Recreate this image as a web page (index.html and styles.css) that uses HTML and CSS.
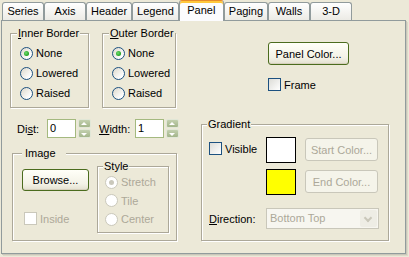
FILE: index.html
```html
<!DOCTYPE html>
<html lang="en">
<head>
  <meta charset="UTF-8" />
  <title>Panel Editor</title>
  <link rel="stylesheet" href="styles.css">
</head>
<body>

<div class="tabs">
  <div class="tab">Series</div>
  <div class="tab">Axis</div>
  <div class="tab">Header</div>
  <div class="tab">Legend</div>
  <div class="tab active">Panel</div>
  <div class="tab">Paging</div>
  <div class="tab">Walls</div>
  <div class="tab">3-D</div>
</div>

<div class="panel">

  <div class="borders">
    <fieldset class="group inner-group">
      <legend><u>I</u>nner Border</legend>
      <div class="radio-list">
        <div class="radio checked"><span class="dot"></span>None</div>
        <div class="radio"><span class="dot"></span>Lowered</div>
        <div class="radio"><span class="dot"></span>Raised</div>
      </div>
    </fieldset>
    <fieldset class="group outer-group">
      <legend><u>O</u>uter Border</legend>
      <div class="radio-list">
        <div class="radio checked"><span class="dot"></span>None</div>
        <div class="radio"><span class="dot"></span>Lowered</div>
        <div class="radio"><span class="dot"></span>Raised</div>
      </div>
    </fieldset>
  </div>

  <div class="panel-options">
    <button class="btn color-btn">Panel Color...</button>
    <div class="check frame-check"><span class="box"></span>Frame</div>
  </div>

  <div class="left-bottom">
    <div class="size-row">
      <span class="size-label">Di<u>s</u>t:</span>
      <div class="edit">0</div>
      <div class="spin"><span class="up"></span><span class="down"></span></div>
      <span class="size-label width-label"><u>W</u>idth:</span>
      <div class="edit">1</div>
      <div class="spin"><span class="up"></span><span class="down"></span></div>
    </div>

    <fieldset class="group image-group">
      <legend>Image</legend>
      <div class="image-body">
        <div class="image-left">
          <button class="btn browse-btn">Browse...</button>
          <div class="check disabled inside-check"><span class="box"></span>Inside</div>
        </div>
        <fieldset class="group style-group disabled">
          <legend>Style</legend>
          <div class="radio-list">
            <div class="radio checked"><span class="dot"></span>Stretch</div>
            <div class="radio"><span class="dot"></span>Tile</div>
            <div class="radio"><span class="dot"></span>Center</div>
          </div>
        </fieldset>
      </div>
    </fieldset>
  </div>

  <fieldset class="group gradient-group">
    <legend>Gradient</legend>
    <div class="gradient-grid">
      <div class="check visible-check"><span class="box"></span>Visible</div>
      <div class="swatch white"></div>
      <button class="btn disabled grad-btn">Start Color...</button>
      <div></div>
      <div class="swatch yellow"></div>
      <button class="btn disabled grad-btn">End Color...</button>
      <span class="direction-label"><u>D</u>irection:</span>
      <div class="combo">
        <span class="combo-text">Bottom Top</span>
        <span class="combo-arrow"></span>
      </div>
    </div>
  </fieldset>

</div>

</body>
</html>
```

FILE: styles.css
```css
:root {
  --face: #ece9d8;
  --tab-border: #919b9c;
  --etch: #aca899;
  --disabled: #aca899;
  --disabled-border: #cac8bb;
  --check-border: #1c5180;
}

* {
  box-sizing: border-box;
}

body {
  margin: 0;
  width: 409px;
  height: 257px;
  overflow: hidden;
  background: var(--face);
  color: #000;
  font: 11px "Liberation Sans", Arial, sans-serif;
}

u {
  text-decoration: underline;
  text-underline-offset: 1px;
}

/* tab strip */

.tabs {
  display: flex;
  align-items: flex-end;
  height: 20px;
  padding-left: 2px;
}

.tab {
  height: 18px;
  min-width: 42px;
  padding: 0 4px;
  border: 1px solid var(--tab-border);
  border-bottom: 0;
  border-radius: 3px 3px 0 0;
  background: linear-gradient(#fff, #ecebe5);
  line-height: 17px;
  text-align: center;
}

.tab.active {
  position: relative;
  z-index: 1;
  height: 21px;
  min-width: 45px;
  margin-bottom: -1px;
  border-top-color: #e68b2c;
  background: #fcfcfe;
  box-shadow: inset 0 2px 0 #ffc83c;
  padding-top: 2px;
  line-height: 15px;
}

/* page body */

.panel {
  display: grid;
  grid-template-columns: 190px 188px;
  grid-template-rows: 81px auto;
  align-content: start;
  align-items: start;
  width: 405px;
  height: 234px;
  margin-left: 1px;
  padding: 6px 0 0 8px;
  border: 1px solid var(--tab-border);
  box-shadow: 1px 1px 0 #c9c7ba, 2px 2px 0 #dcd9c8;
}

.group {
  margin: 0;
  padding: 0;
  min-width: 0;
  border: 1px solid var(--etch);
  box-shadow: inset 1px 1px 0 #fff, 1px 1px 0 #fff;
}

.group legend {
  margin-left: 6px;
  padding: 0 1px;
  line-height: 13px;
  background: var(--face);
}

.borders {
  display: flex;
  gap: 13px;
}

.inner-group {
  width: 79px;
  height: 81px;
}

.outer-group {
  width: 74px;
  height: 81px;
}

.radio-list {
  display: flex;
  flex-direction: column;
  padding: 3px 0 0 9px;
}

.radio {
  display: flex;
  align-items: center;
  gap: 3px;
  height: 20px;
}

.dot {
  position: relative;
  width: 13px;
  height: 13px;
  border: 1px solid var(--check-border);
  border-radius: 50%;
  background: linear-gradient(135deg, #dcd8cb, #fff 80%);
}

.radio.checked .dot::after {
  content: "";
  position: absolute;
  left: 3px;
  top: 3px;
  width: 5px;
  height: 5px;
  border-radius: 50%;
  background: radial-gradient(circle at 40% 40%, #6fdc6f, #21a121 70%);
}

.disabled .radio {
  color: var(--disabled);
}

.disabled .dot {
  border-color: var(--disabled-border);
  background: #fff;
}

.disabled .radio.checked .dot::after {
  background: var(--disabled-border);
}

/* buttons and checks */

.btn {
  display: block;
  margin: 0;
  padding: 0;
  font: inherit;
  color: #000;
  border: 1px solid #4b6c1e;
  border-radius: 3px;
  background: linear-gradient(#fffff8, #f3f2e6 70%, #e3e0d0);
  box-shadow: inset 0 -1px 0 #d6d0bd;
}

.btn.disabled {
  color: var(--disabled);
  border-color: #c9c7ba;
  background: #f5f4ea;
  box-shadow: none;
}

.check {
  display: flex;
  align-items: center;
  gap: 3px;
  height: 13px;
}

.box {
  width: 13px;
  height: 13px;
  border: 1px solid var(--check-border);
  background: linear-gradient(135deg, #dcdcd7, #fff);
}

.check.disabled {
  color: var(--disabled);
}

.check.disabled .box {
  border-color: var(--disabled-border);
  background: #fff;
}

.panel-options {
  padding: 15px 0 0 68px;
}

.color-btn {
  width: 81px;
  height: 23px;
}

.frame-check {
  margin-top: 13px;
}

/* dist / width row */

.left-bottom {
  padding-top: 11px;
}

.size-row {
  display: flex;
  align-items: center;
  height: 19px;
  padding-left: 7px;
}

.size-label {
  width: 30px;
}

.width-label {
  width: 36px;
  margin-left: 8px;
}

.edit {
  width: 29px;
  height: 19px;
  padding-left: 2px;
  border: 1px solid #a4b97f;
  background: #fff;
  line-height: 17px;
}

.spin {
  display: flex;
  flex-direction: column;
  gap: 1px;
  width: 13px;
  height: 19px;
  margin-left: 2px;
}

.spin span {
  position: relative;
  flex: 1;
  border: 1px solid #e1e7d7;
  border-radius: 2px;
  background: linear-gradient(#c3d0af, #a3b58a);
}

.spin span::after {
  content: "";
  position: absolute;
  left: 2px;
  top: 2px;
  border-left: 3.5px solid transparent;
  border-right: 3.5px solid transparent;
}

.spin .up::after {
  border-bottom: 3px solid #fff;
}

.spin .down::after {
  top: 3px;
  border-top: 3px solid #fff;
}

/* image group */

.image-group {
  width: 165px;
  height: 94px;
  margin: 9px 0 0 2px;
}

.image-group > legend {
  margin-left: 9px;
  padding: 0 10px 0 3px;
}

.image-body {
  display: flex;
  align-items: flex-start;
}

.image-left {
  padding-left: 9px;
}

.browse-btn {
  width: 67px;
  height: 22px;
  margin-top: 9px;
}

.inside-check {
  margin: 21px 0 0 2px;
}

.style-group {
  width: 72px;
  height: 73px;
  margin-left: 8px;
}

.style-group legend {
  margin-left: 5px;
}

.style-group .radio-list {
  padding: 0 0 0 7px;
}

.style-group .radio {
  height: 18.5px;
}

/* gradient group */

.gradient-group {
  width: 188px;
  height: 123px;
  margin: 10px 0 0 1px;
}

.gradient-group legend {
  margin-left: 5px;
}

.gradient-grid {
  display: grid;
  grid-template-columns: 57px 39px 73px;
  row-gap: 6px;
  align-items: start;
  padding: 6px 0 0 7px;
}

.visible-check {
  margin-top: 5px;
}

.swatch {
  width: 30px;
  height: 26px;
  border: 1px solid #000;
}

.swatch.white {
  background: #fff;
}

.swatch.yellow {
  background: #ffff00;
}

.grad-btn {
  width: 73px;
  height: 23px;
  margin-top: 1px;
}

.direction-label {
  align-self: center;
  margin-top: 7px;
}

.combo {
  grid-column: 2 / 4;
  display: flex;
  width: 113px;
  height: 21px;
  margin-top: 7px;
  border: 1px solid #c9c7ba;
  background: #f7f6f0;
  color: var(--disabled);
}

.combo-text {
  flex: 1;
  padding-left: 3px;
  line-height: 19px;
}

.combo-arrow {
  position: relative;
  width: 17px;
  margin: 1px;
  border-radius: 2px;
  background: #eeede5;
}

.combo-arrow::after {
  content: "";
  position: absolute;
  left: 5px;
  top: 5px;
  width: 4px;
  height: 4px;
  border-right: 2px solid #c9c7ba;
  border-bottom: 2px solid #c9c7ba;
  transform: rotate(45deg);
}
```
